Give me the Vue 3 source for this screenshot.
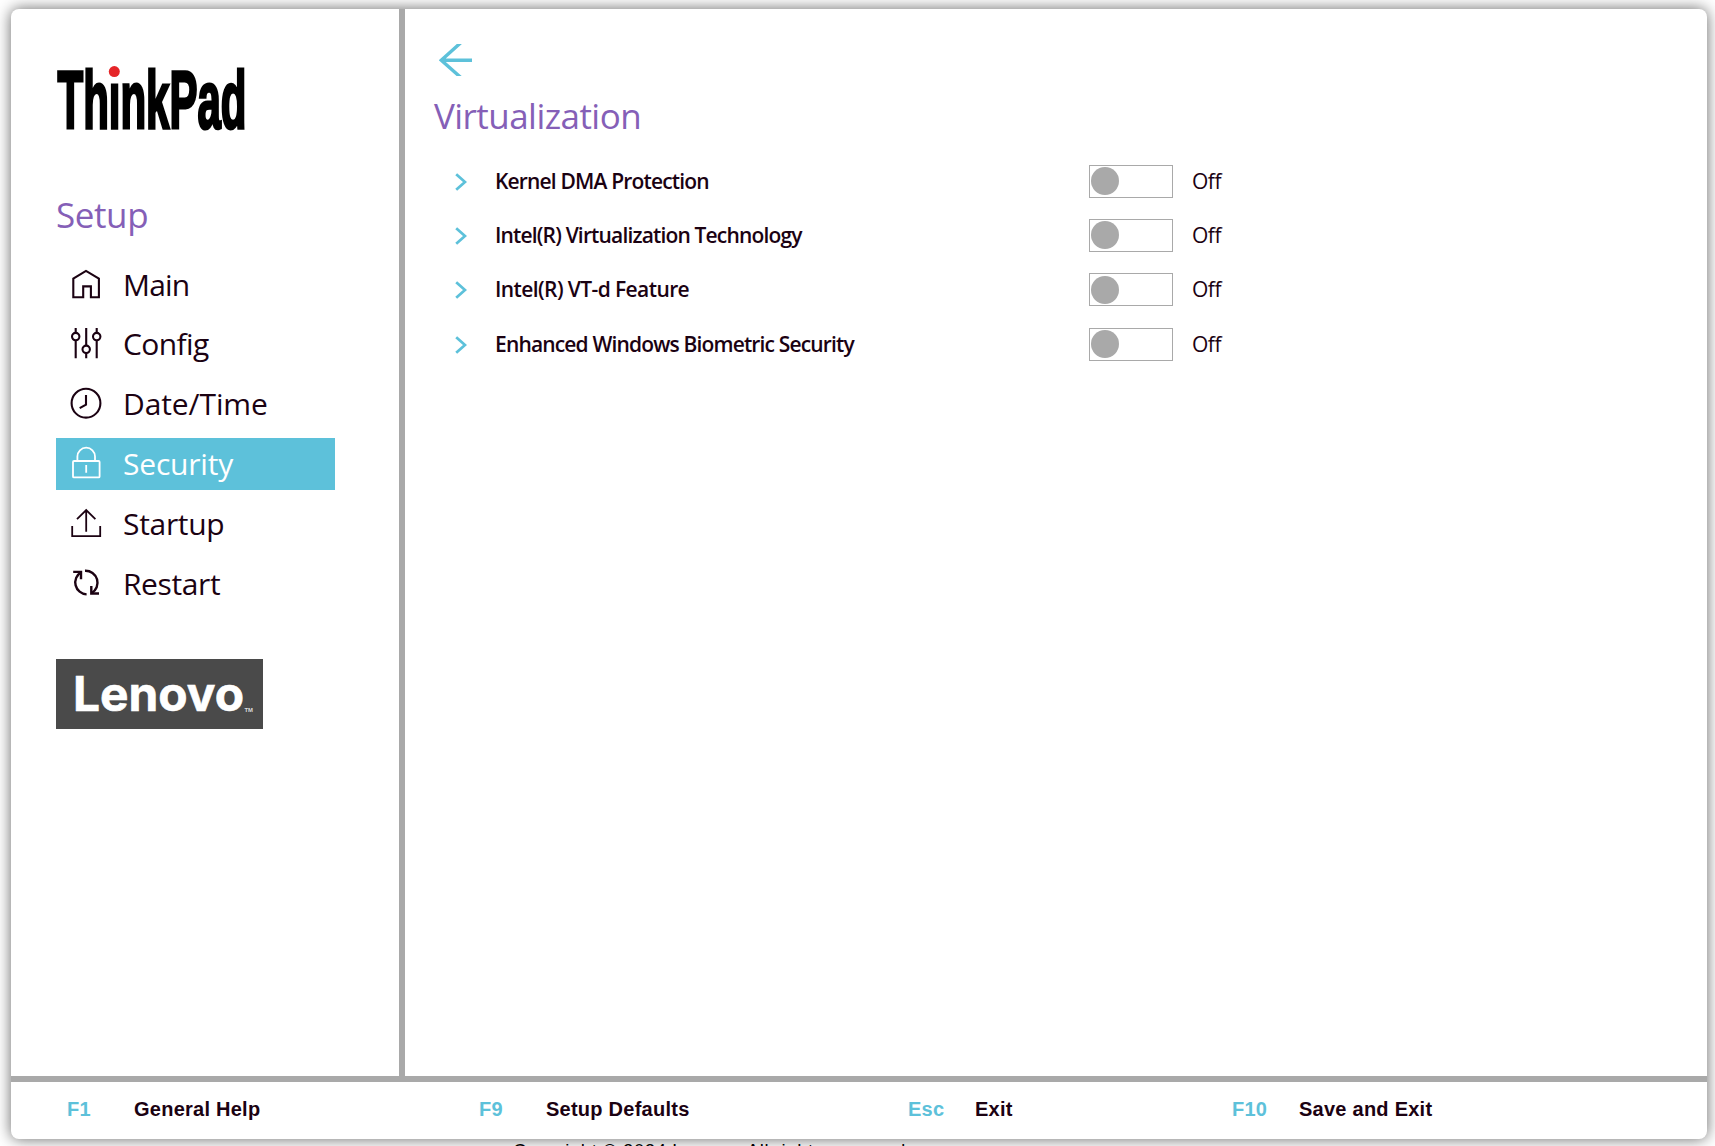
<script setup>
const menu = [
  { name: 'Main', icon: 'main', spacing: '-0.85px' },
  { name: 'Config', icon: 'config', spacing: '-0.6px' },
  { name: 'Date/Time', icon: 'clock', spacing: '-0.1px' },
  { name: 'Security', icon: 'lock', spacing: '-0.2px', active: true },
  { name: 'Startup', icon: 'startup', spacing: '-0.3px' },
  { name: 'Restart', icon: 'restart', spacing: '-0.4px' },
]
const options = [
  { name: 'Kernel DMA Protection', spacing: '-0.84px' },
  { name: 'Intel(R) Virtualization Technology', spacing: '-0.84px' },
  { name: 'Intel(R) VT-d Feature', spacing: '-0.6px' },
  { name: 'Enhanced Windows Biometric Security', spacing: '-0.84px' },
]
const keys = [
  { key: 'F1', label: 'General Help', cls: 'k-help' },
  { key: 'F9', label: 'Setup Defaults', cls: 'k-defaults' },
  { key: 'Esc', label: 'Exit', cls: 'k-exit' },
  { key: 'F10', label: 'Save and Exit', cls: 'k-save' },
]
</script>

<template>
  <div class="screen">
    <div class="window">
      <div class="body">
        <aside class="sidebar">
          <svg class="thinkpad" width="192" height="68" viewBox="0 0 192 68" role="img">
            <text transform="translate(0 62.3) scale(1 1.4)" x="1.5" y="0" textLength="189" lengthAdjust="spacingAndGlyphs">ThinkPad</text>
            <rect x="52.5" y="-3" width="11" height="17" fill="#fff" />
            <circle cx="58.3" cy="5.6" r="5.5" fill="#e52528" />
          </svg>
          <h1 class="setup">Setup</h1>
          <nav class="menu">
            <div v-for="m in menu" :key="m.name" class="item" :class="{ active: m.active }">
              <svg class="icon" width="32" height="32" viewBox="0 0 32 32">
                <path v-if="m.icon === 'main'" d="M3.3 28.3V9.7L16 1.9 28.9 9.7V28.3H20.9V17.4H13.2V28.3Z" />
                <g v-else-if="m.icon === 'config'">
                  <circle cx="5.7" cy="8.6" r="3.7" /><circle cx="16.2" cy="21.3" r="3.7" /><circle cx="26.7" cy="8.6" r="3.7" />
                  <path d="M5.7 0V5M5.7 12.3V30.3M16.2 0V17.6M16.2 25V30.3M26.7 0V5M26.7 12.3V30.3" />
                </g>
                <g v-else-if="m.icon === 'clock'">
                  <circle cx="16" cy="15.2" r="14.4" /><path d="M16 7V16.6L9.7 20.2" />
                </g>
                <g v-else-if="m.icon === 'lock'" class="thin">
                  <rect x="3" y="13" width="26.6" height="16.4" rx="1" />
                  <path d="M7.4 13V8.5a8.8 8.8 0 0 1 17.6 0V13M16.2 17V24.8" />
                </g>
                <path v-else-if="m.icon === 'startup'" class="thin" d="M2.2 18V28.2H30.2V18M16.2 23.8V2M7 11.2L16.2 2L25.4 11.2" />
                <g v-else class="bold">
                  <path d="M11 4.2A12 12 0 0 0 16.6 26.4M15 2.8A12 12 0 0 1 21.5 25.2" />
                  <path d="M3.2 3.9H11V11.2M29 25.5H21.3V18" />
                </g>
              </svg>
              <span :style="{ letterSpacing: m.spacing }">{{ m.name }}</span>
            </div>
          </nav>
          <svg class="lenovo" width="207" height="70" viewBox="0 0 207 70">
            <rect width="207" height="70" fill="#4a4a4a" />
            <text class="brand" x="17" y="52" textLength="171" lengthAdjust="spacingAndGlyphs">Lenovo</text>
            <text class="tm" x="188.5" y="53" textLength="8.5" lengthAdjust="spacingAndGlyphs">TM</text>
          </svg>
        </aside>
        <main class="content">
          <svg class="back" width="33" height="32" viewBox="0 0 33 32">
            <path d="M33 16.2H2.5M21.8 -1.3L2.3 16.2L21.8 33.5" />
          </svg>
          <h2 class="title">Virtualization</h2>
          <div class="options">
            <div v-for="o in options" :key="o.name" class="option">
              <svg class="chevron" width="12" height="18" viewBox="0 0 12 18"><path d="M1.2 1.3L10 9L1.2 16.7" /></svg>
              <span class="name" :style="{ letterSpacing: o.spacing }">{{ o.name }}</span>
              <span class="toggle"><i></i></span>
              <span class="state">Off</span>
            </div>
          </div>
        </main>
      </div>
      <footer class="footer">
        <div v-for="k in keys" :key="k.key" class="fkey" :class="k.cls">
          <b>{{ k.key }}</b><span>{{ k.label }}</span>
        </div>
      </footer>
    </div>
    <div class="copyright">Copyright © 2024 Lenovo. All rights reserved.</div>
  </div>
</template>

<style>
body { margin: 0; overflow: hidden; background: #fff; }
</style>

<style scoped>
.screen {
  box-sizing: border-box;
  width: 1715px;
  height: 1146px;
  padding: 9px 8px 0 11px;
  overflow: hidden;
  font-family: "Open Sans", "Noto Sans", sans-serif;
  color: #1b0212;
}
.window {
  display: flex;
  flex-direction: column;
  height: 1130px;
  border-radius: 8px;
  background: #fff;
  box-shadow: 0 0 15px rgba(0, 0, 0, 0.6);
}
.body { display: flex; height: 1067px; }
.sidebar {
  box-sizing: border-box;
  width: 394px;
  padding: 57px 0 0 45px;
  border-right: 6px solid #a9a9a9;
}
.thinkpad { display: block; overflow: visible; }
.thinkpad text { font: 700 58px "Liberation Sans Narrow", "Liberation Sans", sans-serif; fill: #000; stroke: #000; stroke-width: 2.2; }
h1, h2 { margin: 0; font-weight: 400; font-size: 35px; line-height: 44px; color: #855fb7; }
.setup { margin-top: 59px; letter-spacing: -0.4px; }
.menu { display: flex; flex-direction: column; gap: 7.8px; margin-top: 21.6px; }
.item {
  display: flex;
  align-items: center;
  width: 279px;
  height: 52px;
  font-size: 30px;
  line-height: 51.6px;
  white-space: nowrap;
}
.item span { height: 52px; margin-left: 21px; }
.active { background: #5dc1da; color: #fff; }
.icon { flex: none; margin-left: 14px; overflow: visible; fill: none; stroke: currentColor; stroke-width: 2.1; }
.thin { stroke-width: 1.8; }
.bold { stroke-width: 2.4; }
.lenovo { display: block; margin-top: 49.4px; }
.brand { font: 700 48px Inter, sans-serif; fill: #fff; stroke: #fff; stroke-width: 0.6; }
.tm { font: 700 6px "Liberation Sans", sans-serif; fill: #ddd; }
.content { flex: 1; padding: 35px 0 0 29px; }
.back { display: block; margin-left: 5px; fill: none; stroke: #5dc1da; stroke-width: 3.4; }
.title { margin-top: 17.5px; letter-spacing: -0.55px; }
.options { margin-top: 16.5px; }
.option { display: flex; align-items: center; height: 54.3px; font-size: 21px; line-height: 28px; white-space: nowrap; }
.chevron { flex: none; margin: 1px 0 0 21px; fill: none; stroke: #5dc1da; stroke-width: 2.8; }
.name { width: 594px; margin: -1px 0 0 28px; font-weight: 600; }
.toggle { box-sizing: border-box; width: 84px; height: 33px; padding: 1.5px 1px; border: 1px solid #a9a9a9; }
.toggle i { display: block; width: 28px; height: 28px; border-radius: 50%; background: #a9a9a9; }
.state { margin: -1px 0 0 19px; letter-spacing: -0.5px; }
.footer {
  display: flex;
  align-items: center;
  box-sizing: border-box;
  height: 63px;
  padding-bottom: 4px;
  border-top: 6px solid #a9a9a9;
  font: 700 20px/24px "Liberation Sans", Arial, sans-serif;
  letter-spacing: 0.25px;
}
.fkey { display: flex; flex: none; }
.fkey b { color: #5dc1da; }
.k-help { width: 412px; margin-left: 56px; }
.k-help b, .k-defaults b { width: 67px; }
.k-defaults { width: 429px; }
.k-exit { width: 324px; }
.k-exit b, .k-save b { width: 67px; }
.copyright { margin: 0 0 0 502px; font: 18.5px/24px "Liberation Sans", Arial, sans-serif; letter-spacing: 0.58px; color: #000; }
</style>
